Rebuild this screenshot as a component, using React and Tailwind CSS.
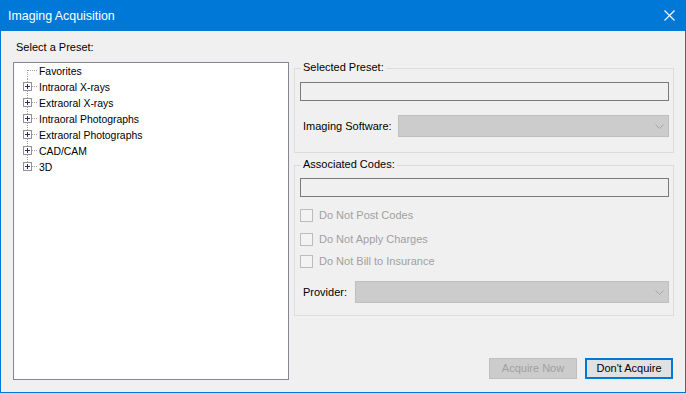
import React from "react";

const items = [
  "Favorites",
  "Intraoral X-rays",
  "Extraoral X-rays",
  "Intraoral Photographs",
  "Extraoral Photographs",
  "CAD/CAM",
  "3D",
];

function TreeConnector({ first, last, hasBox }) {
  return (
    <svg width="25" height="16" viewBox="0 0 25 16" className="shrink-0">
      {first ? (
        <line x1="13.5" y1="7" x2="13.5" y2="16" stroke="#a0a0a0" strokeDasharray="1 1" />
      ) : last ? (
        <line x1="13.5" y1="0" x2="13.5" y2={hasBox ? 3 : 8} stroke="#a0a0a0" strokeDasharray="1 1" />
      ) : hasBox ? (
        <>
          <line x1="13.5" y1="0" x2="13.5" y2="3" stroke="#a0a0a0" strokeDasharray="1 1" />
          <line x1="13.5" y1="12" x2="13.5" y2="16" stroke="#a0a0a0" strokeDasharray="1 1" />
        </>
      ) : (
        <line x1="13.5" y1="0" x2="13.5" y2="16" stroke="#a0a0a0" strokeDasharray="1 1" />
      )}
      {hasBox ? (
        <>
          <line x1="18" y1="7.5" x2="24" y2="7.5" stroke="#a0a0a0" strokeDasharray="1 1" />
          <rect x="9.5" y="3.5" width="8" height="8" fill="#ffffff" stroke="#919191" />
          <line x1="11" y1="7.5" x2="16" y2="7.5" stroke="#2a2a5c" />
          <line x1="13.5" y1="5" x2="13.5" y2="10" stroke="#2a2a5c" />
        </>
      ) : (
        <line x1="14" y1="7.5" x2="24" y2="7.5" stroke="#a0a0a0" strokeDasharray="1 1" />
      )}
    </svg>
  );
}

function Chevron() {
  return (
    <svg width="9" height="5" viewBox="0 0 9 5" className="shrink-0">
      <polyline points="0.5,0.5 4.5,4.5 8.5,0.5" fill="none" stroke="#a6a6a6" strokeWidth="1" />
    </svg>
  );
}

function Combo({ className }) {
  return (
    <div
      className={
        "h-[22px] bg-[#cccccc] border border-[#bfbfbf] flex items-center justify-end pr-[4px] " +
        className
      }
    >
      <Chevron />
    </div>
  );
}

function Check({ label, className }) {
  return (
    <div className={"flex items-center h-[13px] " + className}>
      <div className="w-[13px] h-[13px] border border-[#bcbcbc] bg-[#f3f3f3] shrink-0" />
      <span className="ml-[6px] text-[#a0a0a0] leading-[13px]">{label}</span>
    </div>
  );
}

export default function App() {
  return (
    <div
      className="w-[686px] h-[393px] bg-[#0078d7] flex flex-col overflow-hidden text-[11px] text-black"
      style={{ fontFamily: '"Liberation Sans", Arial, sans-serif' }}
    >
      <div className="h-[31px] shrink-0 flex items-center justify-between pl-[8px] pr-[11px]">
        <span className="text-white text-[12.4px] leading-[16px]">Imaging Acquisition</span>
        <svg width="11" height="11" viewBox="0 0 11 11">
          <line x1="0.5" y1="0.5" x2="10.5" y2="10.5" stroke="#ffffff" strokeWidth="1.1" />
          <line x1="10.5" y1="0.5" x2="0.5" y2="10.5" stroke="#ffffff" strokeWidth="1.1" />
        </svg>
      </div>
      <div className="flex-1 mx-[1px] mb-[1px] bg-[#f0f0f0] flex">
        {/* Left column */}
        <div className="pl-[12px] pt-[10px] flex flex-col">
          <div className="pl-[3px] leading-[13px] h-[13px]">Select a Preset:</div>
          <div className="mt-[8px] w-[276px] h-[318px] border border-[#828790] bg-white">
            {items.map((t, i) => (
              <div key={t} className="flex items-center h-[16px]">
                <TreeConnector first={i === 0} last={i === items.length - 1} hasBox={i !== 0} />
                <span className="text-[10.4px] leading-[16px] pt-[1px]">{t}</span>
              </div>
            ))}
          </div>
        </div>
        {/* Right column */}
        <div className="ml-[5px] w-[380px] pt-[37px] pb-[13px] flex flex-col">
          <div className="relative h-[85px] border border-[#dcdcdc] pt-[13px] pl-[5px] pr-[4px]">
            <span className="absolute top-[-8px] left-[6px] px-[2px] bg-[#f0f0f0] leading-[13px]">
              Selected Preset:
            </span>
            <div className="h-[19px] border border-[#7a7a7a] bg-[#f0f0f0]" />
            <div className="mt-[14px] flex items-center">
              <span className="ml-[3px] w-[95px] leading-[13px]">Imaging Software:</span>
              <Combo className="flex-1" />
            </div>
          </div>
          <div className="relative mt-[12px] h-[151px] border border-[#dcdcdc] pt-[12px] pl-[5px] pr-[4px]">
            <span className="absolute top-[-8px] left-[6px] px-[2px] bg-[#f0f0f0] leading-[13px]">
              Associated Codes:
            </span>
            <div className="h-[19px] border border-[#7a7a7a] bg-[#f0f0f0]" />
            <Check label="Do Not Post Codes" className="mt-[12px]" />
            <Check label="Do Not Apply Charges" className="mt-[11px]" />
            <Check label="Do Not Bill to Insurance" className="mt-[9px]" />
            <div className="mt-[13px] flex items-center">
              <span className="ml-[3px] w-[52px] leading-[13px]">Provider:</span>
              <Combo className="flex-1" />
            </div>
          </div>
          <div className="mt-auto flex justify-end gap-[8px] pr-[1px]">
            <div className="w-[88px] h-[21px] bg-[#cccccc] border border-[#bfbfbf] flex items-center justify-center text-[#a0a0a0]">
              Acquire Now
            </div>
            <div className="w-[88px] h-[21px] bg-[#e1e1e1] border-2 border-[#0078d7] flex items-center justify-center">
              Don't Acquire
            </div>
          </div>
        </div>
      </div>
    </div>
  );
}
